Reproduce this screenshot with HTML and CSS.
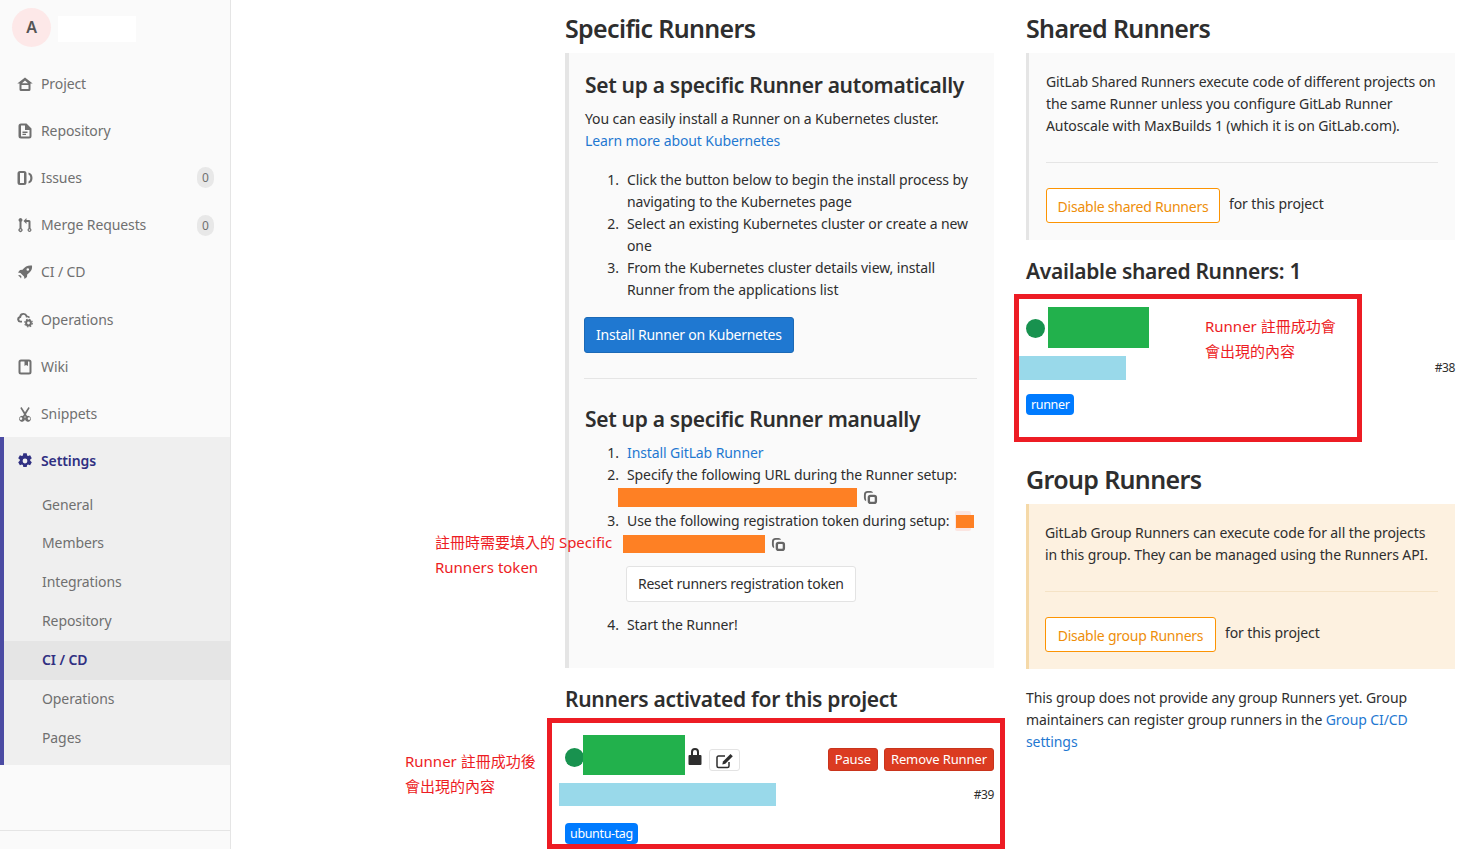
FILE: index.html
```html
<!DOCTYPE html>
<html lang="zh-Hant">
<head>
  <meta charset="UTF-8" />
  <title>CI / CD Settings</title>
  <link rel="stylesheet" href="styles.css">
</head>
<body>
  <aside class="sidebar">
    <div class="context">
      <div class="avatar">A</div>
      <div class="name-mask"></div>
    </div>
    <nav class="nav">
      <a class="nav-item">
        <svg class="icon" viewBox="0 0 16 16"><path d="M8 1.500 0.300 7.500h2.200v6a1.500 1.500 0 0 0 1.500 1.500h8a1.500 1.500 0 0 0 1.500-1.500v-6h2.200zM4.500 9h7v4h-7zM5 7.300 8 4.600l3 2.700z" fill-rule="evenodd"/></svg>
        <span>Project</span>
      </a>
      <a class="nav-item">
        <svg class="icon" viewBox="0 0 16 16"><path d="M4 .5h5.500L14.500 5.500V13a2.500 2.500 0 0 1-2.500 2.500H4A2.500 2.500 0 0 1 1.500 13V3A2.500 2.500 0 0 1 4 .5zm0 2v10.500a.5.5 0 0 0 .5.5h8a.5.5 0 0 0 0-.5V7H8V2.500zm1.500 6h5V10h-5zm0 2.200h3.500V12H5.500z" fill-rule="evenodd"/></svg>
        <span>Repository</span>
      </a>
      <a class="nav-item">
        <svg class="icon" viewBox="0 0 16 16"><path d="M3 1h4a2.500 2.500 0 0 1 2.500 2.500v9A2.500 2.500 0 0 1 7 15H3A2.500 2.500 0 0 1 .5 12.500v-9A2.500 2.500 0 0 1 3 1zm0 2v10h4V3zM11.500 2.500c2.500.5 4 2.500 4 5.500s-1.500 5-4 5.500V11.400c1.100-.5 1.800-1.700 1.800-3.400s-.7-2.900-1.800-3.400z" fill-rule="evenodd"/></svg>
        <span>Issues</span>
        <span class="count">0</span>
      </a>
      <a class="nav-item">
        <svg class="icon" viewBox="0 0 16 16"><path d="M3.500 1a2 2 0 0 1 1 3.700v6.600a2 2 0 1 1-2 0V4.700a2 2 0 0 1 1-3.700zm0 11.200a.8.8 0 1 0 0 1.600.8.8 0 0 0 0-1.600zM12.500 15a2 2 0 0 1-1-3.700V5H9.500v2L6.500 4l3-3v2h2.500a1.500 1.500 0 0 1 1.500 1.500v6.800a2 2 0 0 1-1 3.700zm0-2.800a.8.8 0 1 0 0 1.600.8.8 0 0 0 0-1.600z"/></svg>
        <span>Merge Requests</span>
        <span class="count">0</span>
      </a>
      <a class="nav-item">
        <svg class="icon" viewBox="0 0 16 16"><path d="M15 1.500c-4-.5-7 .8-9.500 4.300L3 6 1 8.500l2.500.5 3.500 3.500.5 2.500L10 13l.2-2.500C13.800 8 15.500 5.500 15 1.500zM10.800 6.800a1.300 1.300 0 1 1 0-2.600 1.300 1.300 0 0 1 0 2.600zM1 11.500l2-.5 1.500 1.500-.5 2-1-1.500z" fill-rule="evenodd"/></svg>
        <span>CI / CD</span>
      </a>
      <a class="nav-item">
        <svg class="icon" viewBox="0 0 16 16"><path d="M6.500 1a4.200 4.200 0 0 1 4 2.700 3 3 0 0 1 2.700 1.600l-1.700.6a1.500 1.500 0 0 0-1.800-.4l-.8-.1-.2-.9A2.300 2.300 0 0 0 4.200 5l-.1.700-.8.2A1.500 1.500 0 0 0 3.500 8.800H5v1.700H3.500A3.200 3.200 0 0 1 2.300 4.300 4.200 4.200 0 0 1 6.500 1z"/><circle cx="11.500" cy="11" r="2.400" fill="none" stroke="currentColor" stroke-width="2"/><circle cx="11.500" cy="11" r="3.800" fill="none" stroke="currentColor" stroke-width="1.200" stroke-dasharray="1.500 1.500"/></svg>
        <span>Operations</span>
      </a>
      <a class="nav-item">
        <svg class="icon" viewBox="0 0 16 16"><path d="M4 .5h8A2.500 2.500 0 0 1 14.500 3v10a2.500 2.500 0 0 1-2.500 2.500H4A2.500 2.500 0 0 1 1.500 13V3A2.500 2.500 0 0 1 4 .5zm0 2a.5.5 0 0 0-.5.5v10a.5.5 0 0 0 .5.5h8a.5.5 0 0 0 .5-.5V3a.5.5 0 0 0-.5-.5h-1v4.500L9 6 7.500 7V2.500z" fill-rule="evenodd"/></svg>
        <span>Wiki</span>
      </a>
      <a class="nav-item">
        <svg class="icon" viewBox="0 0 16 16"><path d="M4.500 1 8 6.300 11.500 1l1.200.9L9 8.200l1.100 1.700a3 3 0 1 1-1.500 1L8 9.900l-.6 1a3 3 0 1 1-1.500-1L7 8.200 3.300 1.900zM4 11.300a1.300 1.300 0 1 0 0 2.600 1.300 1.300 0 0 0 0-2.600zm8 0a1.300 1.300 0 1 0 0 2.600 1.300 1.300 0 0 0 0-2.600z" fill-rule="evenodd"/></svg>
        <span>Snippets</span>
      </a>
    </nav>
    <div class="nav-group">
      <a class="nav-item nav-item-active">
        <svg class="icon" viewBox="0 0 16 16"><path d="M6.300.3h3.400l.4 2.100 1 .6 2-.8 1.700 3-1.600 1.400v1.200l1.600 1.400-1.700 3-2-.8-1 .6-.4 2.100H6.300l-.4-2.100-1-.6-2 .8-1.700-3 1.600-1.400V6.600L1.200 5.200l1.700-3 2 .8 1-.6zM8 5.600a2.400 2.400 0 1 0 0 4.800 2.400 2.400 0 0 0 0-4.800z" fill-rule="evenodd"/></svg>
        <span>Settings</span>
      </a>
      <ul class="subnav">
        <li>General</li>
        <li>Members</li>
        <li>Integrations</li>
        <li>Repository</li>
        <li class="subnav-active">CI / CD</li>
        <li>Operations</li>
        <li>Pages</li>
      </ul>
    </div>
    <div class="sidebar-foot"></div>
  </aside>

  <main class="content">
    <section class="col">
      <h3 class="title">Specific Runners</h3>
      <div class="panel panel-specific">
        <h4 class="subtitle">Set up a specific Runner automatically</h4>
        <p>You can easily install a Runner on a Kubernetes cluster.<br><a class="link">Learn more about Kubernetes</a></p>
        <ol class="steps steps-auto">
          <li>Click the button below to begin the install process by navigating to the Kubernetes page</li>
          <li>Select an existing Kubernetes cluster or create a new one</li>
          <li>From the Kubernetes cluster details view, install Runner from the applications list</li>
        </ol>
        <button class="btn btn-primary">Install Runner on Kubernetes</button>
        <hr class="rule rule-specific">
        <h4 class="subtitle">Set up a specific Runner manually</h4>
        <ol class="steps steps-manual">
          <li><a class="link">Install GitLab Runner</a></li>
          <li>Specify the following URL during the Runner setup:
            <div class="secret secret-url">
              <span class="bar-orange bar-url"></span>
              <svg class="copy" viewBox="0 0 16 16"><use href="#copy-icon"/></svg>
            </div>
          </li>
          <li>Use the following registration token during setup:<span class="code-chip"><span class="bar-orange"></span></span>
            <div class="secret secret-token">
              <span class="bar-orange bar-token"></span>
              <svg class="copy" viewBox="0 0 16 16"><use href="#copy-icon"/></svg>
            </div>
            <button class="btn btn-default btn-reset">Reset runners registration token</button>
          </li>
          <li>Start the Runner!</li>
        </ol>
      </div>

      <h4 class="subtitle subtitle-activated">Runners activated for this project</h4>
      <div class="runner runner-specific">
        <div class="runner-head">
          <span class="dot"></span>
          <span class="mask-green mask-specific"></span>
          <svg class="lock" viewBox="0 0 14 18"><path d="M3 8V5a4 4 0 0 1 8 0v3h1.500a1 1 0 0 1 1 1v8a1 1 0 0 1-1 1h-11a1 1 0 0 1-1-1V9a1 1 0 0 1 1-1zm2 0h4V5a2 2 0 0 0-4 0z" fill-rule="evenodd"/></svg>
          <button class="btn-edit">
            <svg viewBox="0 0 18 16"><path d="M13 9v4a1.500 1.500 0 0 1-1.500 1.500h-9A1.500 1.500 0 0 1 1 13V4.500A1.500 1.500 0 0 1 2.500 3H9" fill="none" stroke="currentColor" stroke-width="1.500"/><path d="M14.500 1l2.300 2.300-7.500 7.500-3 .7.700-3z"/></svg>
          </button>
          <div class="runner-actions">
            <button class="btn btn-danger">Pause</button>
            <button class="btn btn-danger">Remove Runner</button>
          </div>
        </div>
        <div class="runner-meta">
          <span class="mask-blue mask-blue-specific"></span>
          <small>#39</small>
        </div>
        <span class="tag">ubuntu-tag</span>
      </div>
    </section>

    <section class="col">
      <h3 class="title">Shared Runners</h3>
      <div class="panel panel-shared">
        <p>GitLab Shared Runners execute code of different projects on the same Runner unless you configure GitLab Runner Autoscale with MaxBuilds 1 (which it is on GitLab.com).</p>
        <hr class="rule rule-shared">
        <div class="toggle-row">
          <button class="btn btn-warning btn-shared">Disable shared Runners</button>
          <span>for this project</span>
        </div>
      </div>

      <h4 class="subtitle subtitle-available">Available shared Runners: 1</h4>
      <div class="runner runner-shared">
        <div class="runner-head">
          <span class="dot"></span>
          <span class="mask-green mask-shared"></span>
        </div>
        <div class="runner-meta">
          <span class="mask-blue mask-blue-shared"></span>
          <small>#38</small>
        </div>
        <span class="tag">runner</span>
      </div>

      <h3 class="title title-group">Group Runners</h3>
      <div class="panel panel-group">
        <p>GitLab Group Runners can execute code for all the projects in this group. They can be managed using the Runners API.</p>
        <hr class="rule rule-group">
        <div class="toggle-row">
          <button class="btn btn-warning btn-group">Disable group Runners</button>
          <span>for this project</span>
        </div>
      </div>
      <p class="group-note">This group does not provide any group Runners yet. Group maintainers can register group runners in the <a class="link">Group CI/CD settings</a></p>
    </section>
  </main>

  <!-- annotations drawn over the screenshot -->
  <div class="note note-token">註冊時需要填入的 Specific<br>Runners token</div>
  <div class="note note-specific">Runner 註冊成功後<br>會出現的內容</div>
  <div class="note note-shared">Runner 註冊成功會<br>會出現的內容</div>
  <div class="redbox redbox-specific"></div>
  <div class="redbox redbox-shared"></div>

  <svg class="defs" width="0" height="0">
    <symbol id="copy-icon" viewBox="0 0 16 16">
      <path d="M5 1h3a3 3 0 0 1 2.800 2H8.500A1 1 0 0 0 8 3H5a2 2 0 0 0-2 2v3.500c0 .4.100.7.300 1V12A4 4 0 0 1 1 8.500V5a4 4 0 0 1 4-4z"/>
      <path d="M8 5h4a3 3 0 0 1 3 3v4a3 3 0 0 1-3 3H8a3 3 0 0 1-3-3V8a3 3 0 0 1 3-3zm0 2.500a.5.5 0 0 0-.5.5v4a.5.5 0 0 0 .5.5h4a.5.5 0 0 0 .5-.5V8a.5.5 0 0 0-.5-.5z" fill-rule="evenodd"/>
    </symbol>
  </svg>
</body>
</html>
```

FILE: styles.css
```css
* { box-sizing: border-box; }
html, body {
  margin: 0;
  height: 849px;
  overflow: hidden;
}
body {
  position: relative;
  display: flex;
  font-family: "Noto Sans", "Noto Sans CJK TC", sans-serif;
  font-size: 14px;
  line-height: 22px;
  letter-spacing: -0.1px;
  color: #2e2e2e;
  background: #fff;
}

/* sidebar */
.sidebar {
  width: 231px;
  height: 849px;
  flex: none;
  background: #fafafa;
  border-right: 1px solid #e5e5e5;
  display: flex;
  flex-direction: column;
}
.context {
  display: flex;
  align-items: center;
  height: 60px;
  padding: 0 0 5px 12px;
}
.avatar {
  width: 39px;
  height: 39px;
  border-radius: 50%;
  background: #fde8e8;
  color: #555;
  font-size: 16px;
  font-weight: 600;
  line-height: 39px;
  text-align: center;
}
.name-mask {
  width: 78px;
  height: 26px;
  margin: 3px 0 0 7px;
  background: #fff;
}
.nav-item {
  display: flex;
  align-items: center;
  height: 47.2px;
  padding: 0 16px 0 17px;
  color: #707070;
}
.icon {
  width: 16px;
  height: 16px;
  margin-right: 8px;
  fill: currentColor;
  flex: none;
}
.count {
  margin-left: auto;
  width: 17px;
  height: 21px;
  border-radius: 9px;
  background: #e8e8e8;
  font-size: 12px;
  line-height: 21px;
  text-align: center;
}
.nav { flex: none; }
.nav-group {
  height: 328px;
  margin-top: -0.6px;
  background: #efefef;
  border-left: 4px solid #4b4ba3;
}
.nav-item-active {
  height: 48.600px;
  padding-left: 13px;
  color: #303082;
  font-weight: 600;
}
.subnav {
  list-style: none;
  margin: 0;
  padding: 0;
}
.subnav li {
  height: 38.85px;
  line-height: 38.85px;
  padding-left: 38px;
  color: #707070;
}
.subnav .subnav-active {
  background: #e5e5e5;
  color: #303082;
  font-weight: 600;
}
.sidebar-foot {
  height: 19px;
  margin-top: 65px;
  border-top: 1px solid #e5e5e5;
}

/* content */
.content {
  display: flex;
  gap: 32px;
  padding-left: 334px;
}
.col { width: 429px; flex: none; }
.title {
  margin: 11px 0 8px;
  font-size: 25px;
  line-height: 34px;
  font-weight: 600;
  letter-spacing: -0.65px;
}
.subtitle {
  margin: 0 0 8px;
  font-size: 21px;
  line-height: 30px;
  font-weight: 600;
  letter-spacing: -0.3px;
}
.panel {
  background: #fafafa;
  border-left: 4px solid #e5e5e5;
}
.panel p { margin: 0; }
.panel-specific {
  height: 615px;
  padding: 17px 17px 0 16px;
}
.panel-shared {
  height: 187px;
  padding: 18px 17px 0 17px;
  border-left-width: 3px;
}
.panel-group {
  height: 165px;
  padding: 18px 17px 0 16px;
  background: #fdf1e0;
  border-left: 3px solid #f5d9a8;
}
.link { color: #1f78d1; }
.steps {
  margin: 0;
  padding-left: 42px;
}
.steps li::marker { content: counter(list-item) ".\2002\200A"; }
.steps-auto { margin: 17px 0 16px; }

/* buttons */
.btn {
  display: inline-block;
  height: 36px;
  padding: 0 11px;
  border: 1px solid transparent;
  border-radius: 3px;
  background: #fff;
  font: inherit;
  letter-spacing: -0.24px;
}
.btn-primary {
  margin-left: -1px;
  background: #1f78d1;
  border-color: #1b69b6;
  color: #fff;
}
.btn-default {
  border-color: #e3e3e3;
  color: #2e2e2e;
}
.btn-warning {
  border-color: #fc9403;
  color: #ee8e0a;
  height: 35px;
  line-height: 35px;
}
.btn-danger {
  height: 23px;
  padding: 0 6px;
  background: #db3b21;
  border-color: #c9341c;
  color: #fff;
  font-size: 13px;
  line-height: 21px;
  letter-spacing: -0.1px;
}
.btn-reset {
  display: block;
  margin: 13px 0 12px -1px;
  height: 36px;
}
.btn-shared { width: 174px; padding: 0; }
.btn-group { width: 171px; padding: 0; }

.rule {
  margin: 0;
  border: 0;
  border-top: 1px solid #e5e5e5;
}
.rule-specific { margin: 25px 0 25px -1px; }
.rule-shared { margin: 25px 0; }
.rule-group { margin: 25px 0; border-color: #f5e3c6; }
.toggle-row {
  display: flex;
  align-items: flex-start;
  gap: 9px;
}
.toggle-row span { margin-top: 5px; }

/* redacted values */
.bar-orange {
  display: block;
  background: #fe8024;
}
.secret {
  display: flex;
  align-items: center;
  height: 19px;
  margin-top: 2px;
}
.secret-url { margin: 2px 0 3px -9px; }
.secret-token { margin: 3px 0 0 -4px; height: 18px; }
.bar-url { width: 239px; height: 19px; }
.bar-token { width: 142px; height: 18px; }
.copy {
  width: 15px;
  height: 15px;
  margin-left: 6px;
  fill: #666;
}
.code-chip {
  display: inline-block;
  vertical-align: top;
  width: 16px;
  height: 20px;
  margin: 1px 0 0 5px;
  background: #fbe5e1;
  border-radius: 2px;
}
.code-chip .bar-orange {
  width: 18px;
  height: 13px;
  margin-top: 4px;
  margin-left: 1px;
}

/* runners */
.subtitle-activated { margin: 16px 0 22px; }
.subtitle-available { margin: 16px 0 21px; }
.title-group { margin: 47px 0 8px; }
.runner { position: relative; }
.runner-head {
  display: flex;
  align-items: center;
}
.runner-specific .runner-head { height: 40px; margin-top: -1px; }
.runner-shared .runner-head { height: 41px; margin-top: 2px; }
.dot {
  width: 19px;
  height: 19px;
  border-radius: 50%;
  background: #18924f;
  flex: none;
  margin-top: 4px;
}
.runner-shared .dot { margin-top: 2px; }
.mask-green { display: block; height: 100%; background: #22b14c; }
.mask-specific { width: 102px; margin-left: -1px; }
.mask-shared { width: 101px; margin-left: 3px; }
.lock { width: 14px; height: 18px; margin: 2px 0 0 3px; fill: #2e2e2e; }
.btn-edit {
  width: 31px;
  height: 22px;
  margin: 10px 0 0 7px;
  padding: 0;
  background: #fff;
  border: 1px solid #e3e3e3;
  border-radius: 3px;
  color: #2e2e2e;
}
.btn-edit svg { display: block; width: 18px; height: 16px; margin: 2px auto 0; fill: currentColor; }
.runner-actions {
  margin: 9px 0 0 auto;
  display: flex;
  gap: 6px;
}
.runner-meta {
  display: flex;
  align-items: center;
  justify-content: space-between;
  margin: 8px 0 16px -6px;
}
.runner-shared .runner-meta { margin: 8px 0 13px -7px; }
.runner-meta small { font-size: 12px; letter-spacing: -0.4px; }
.mask-blue { display: block; height: 23px; background: #99d9ea; }
.mask-blue-specific { width: 217px; }
.mask-blue-shared { width: 107px; height: 24px; }
.tag {
  display: inline-block;
  height: 21px;
  padding: 0 5px;
  border-radius: 4px;
  background: #007bff;
  color: #fff;
  font-size: 12.5px;
  line-height: 21px;
  letter-spacing: -0.35px;
}
.group-note { margin: 18px 0 0; }

/* annotations */
.note {
  position: absolute;
  color: #ed1c24;
  font-size: 15px;
  line-height: 25px;
  letter-spacing: 0;
  white-space: nowrap;
}
.note-token { left: 435px; top: 530px; }
.note-specific { left: 405px; top: 749px; }
.note-shared { left: 1205px; top: 314px; }
.redbox {
  position: absolute;
  border: 5px solid #ed1c24;
}
.redbox-specific { left: 547px; top: 718px; width: 458px; height: 131px; }
.redbox-shared { left: 1014px; top: 294px; width: 348px; height: 148px; }
.defs { position: absolute; }
```
